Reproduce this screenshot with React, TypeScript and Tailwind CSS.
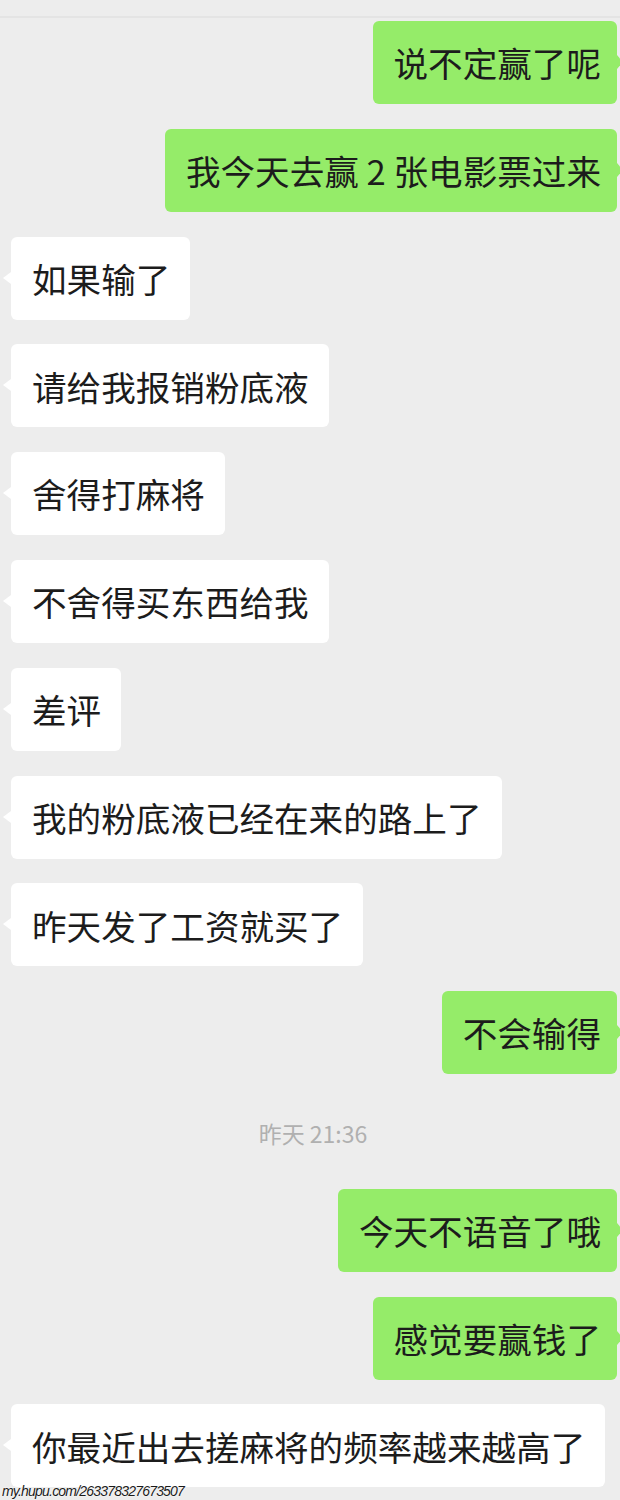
import React from "react";

type Msg =
  | { kind: "me" | "them"; text: string }
  | { kind: "time"; text: string };

const messages: Msg[] = [
  { kind: "me", text: "说不定赢了呢" },
  { kind: "me", text: "我今天去赢 2 张电影票过来" },
  { kind: "them", text: "如果输了" },
  { kind: "them", text: "请给我报销粉底液" },
  { kind: "them", text: "舍得打麻将" },
  { kind: "them", text: "不舍得买东西给我" },
  { kind: "them", text: "差评" },
  { kind: "them", text: "我的粉底液已经在来的路上了" },
  { kind: "them", text: "昨天发了工资就买了" },
  { kind: "me", text: "不会输得" },
  { kind: "time", text: "昨天 21:36" },
  { kind: "me", text: "今天不语音了哦" },
  { kind: "me", text: "感觉要赢钱了" },
  { kind: "them", text: "你最近出去搓麻将的频率越来越高了" },
];

function Bubble({ mine, text }: { mine: boolean; text: string }) {
  return (
    <div
      className={
        mine
          ? "relative self-end mr-[3px] h-[83px] flex items-center rounded-[6px] bg-[#95ec69] pl-[21px] pr-[16px]"
          : "relative self-start ml-[11px] h-[83px] flex items-center rounded-[6px] bg-white pl-[21px] pr-[20px]"
      }
    >
      {/* little tail */}
      {mine ? (
        <span className="absolute right-[-6px] top-[34px] w-0 h-0 border-y-[7px] border-y-transparent border-l-[6px] border-l-[#95ec69]" />
      ) : (
        <span className="absolute left-[-8px] top-[35px] w-0 h-0 border-y-[6px] border-y-transparent border-r-[8px] border-r-white" />
      )}
      <span className="whitespace-nowrap text-[34.6px] leading-none text-[#1c1c1c]">{text}</span>
    </div>
  );
}

export default function App() {
  return (
    <div
      className="relative w-[620px] h-[1500px] overflow-hidden bg-[#ededed] pt-[16px]"
      style={{ fontFamily: '"Noto Sans CJK SC", "Noto Sans", sans-serif' }}
    >
      <div className="h-[2px] bg-[#e4e4e4]" />

      <div className="flex flex-col gap-[24.8px] pt-[3px]">
        {messages.map((m, i) =>
          m.kind === "time" ? (
            <div key={i} className="h-[65px] flex items-center justify-center pt-[4px] pl-[6px]">
              <span className="text-[23px] text-[#b0b0b0]">{m.text}</span>
            </div>
          ) : (
            <Bubble key={i} mine={m.kind === "me"} text={m.text} />
          )
        )}
      </div>

      {/* watermark */}
      <div
        className="absolute left-[2px] bottom-[2px] text-[14px] leading-none italic tracking-[-0.8px] text-[#1a1a1a] [text-shadow:0_0_2px_#fff,0_0_1px_#fff]"
        style={{ fontFamily: '"Liberation Sans", Arial, sans-serif' }}
      >
        my.hupu.com/263378327673507
      </div>
    </div>
  );
}
